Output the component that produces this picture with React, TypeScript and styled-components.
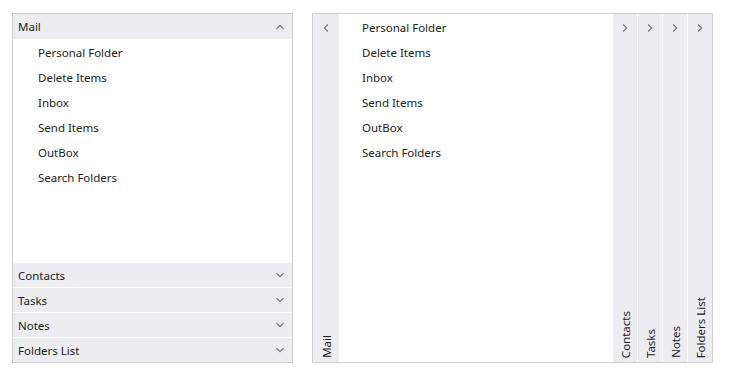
import React from "react";
import styled, { createGlobalStyle } from "styled-components";

const GlobalStyle = createGlobalStyle`
	body {
		margin: 0;
		background: #ffffff;
		font-family: "Segoe UI", "Noto Sans", sans-serif;
		font-size: 11.5px;
		color: #222222;
	}
`;

const folders = ["Personal Folder", "Delete Items", "Inbox", "Send Items", "OutBox", "Search Folders"];
const groups = ["Contacts", "Tasks", "Notes", "Folders List"];

type Dir = "up" | "down" | "left" | "right";

const Chevron = ({ dir }: { dir: Dir }) => {
	const rot = { up: 180, down: 0, left: 90, right: -90 }[dir];
	return (
		<svg width="10" height="10" viewBox="0 0 10 10" style={{ transform: `rotate(${rot}deg)` }}>
			<path d="M1.5 3.2 L5 6.7 L8.5 3.2" fill="none" stroke="#707070" strokeWidth="1.1" />
		</svg>
	);
};

const Page = () => (
	<Wrap>
		<GlobalStyle />
		<Accordion>
			<Header>
				<span>Mail</span>
				<Chevron dir="up" />
			</Header>
			<Content>
				{folders.map((f) => (
					<Item key={f}>{f}</Item>
				))}
			</Content>
			{groups.map((g) => (
				<Header key={g} divided>
					<span>{g}</span>
					<Chevron dir="down" />
				</Header>
			))}
		</Accordion>
		<Horizontal>
			<Strip wide>
				<Chevron dir="left" />
				<VText>Mail</VText>
			</Strip>
			<HContent>
				{folders.map((f) => (
					<Item key={f}>{f}</Item>
				))}
			</HContent>
			{groups.map((g) => (
				<Strip key={g} divided>
					<Chevron dir="right" />
					<VText>{g}</VText>
				</Strip>
			))}
		</Horizontal>
	</Wrap>
);

export default Page;

const Wrap = styled.div`
	display: flex;
	gap: 19px;
	padding: 13px 0 0 12px;
`;

const Accordion = styled.div`
	width: 279px;
	height: 348px;
	border: 1px solid #cfcdd8;
	display: flex;
	flex-direction: column;
`;

const Header = styled.div<{ divided?: boolean }>`
	height: 25px;
	flex: none;
	box-sizing: border-box;
	border-top: ${({ divided }) => (divided ? "1px solid #ffffff" : "none")};
	background: #edecf1;
	display: flex;
	align-items: center;
	justify-content: space-between;
	padding: 0 7px 0 5px;
	svg {
		display: block;
	}
`;

const Content = styled.div`
	flex: 1;
	padding: 1px 0 0 25px;
	background: #ffffff;
`;

const Item = styled.div`
	height: 25px;
	line-height: 25px;
`;

const Horizontal = styled.div`
	width: 399px;
	height: 348px;
	border: 1px solid #cfcdd8;
	display: flex;
`;

const Strip = styled.div<{ divided?: boolean; wide?: boolean }>`
	width: ${({ wide }) => (wide ? "26px" : "25px")};
	flex: none;
	box-sizing: border-box;
	border-left: ${({ divided }) => (divided ? "1px solid #ffffff" : "none")};
	background: #edecf1;
	display: flex;
	flex-direction: column;
	align-items: center;
	justify-content: space-between;
	padding: 9px 0 4px;
	svg {
		display: block;
	}
`;

const VText = styled.div`
	writing-mode: vertical-rl;
	transform: rotate(180deg);
	white-space: nowrap;
`;

const HContent = styled.div`
	flex: 1;
	padding: 1px 0 0 23px;
`;
